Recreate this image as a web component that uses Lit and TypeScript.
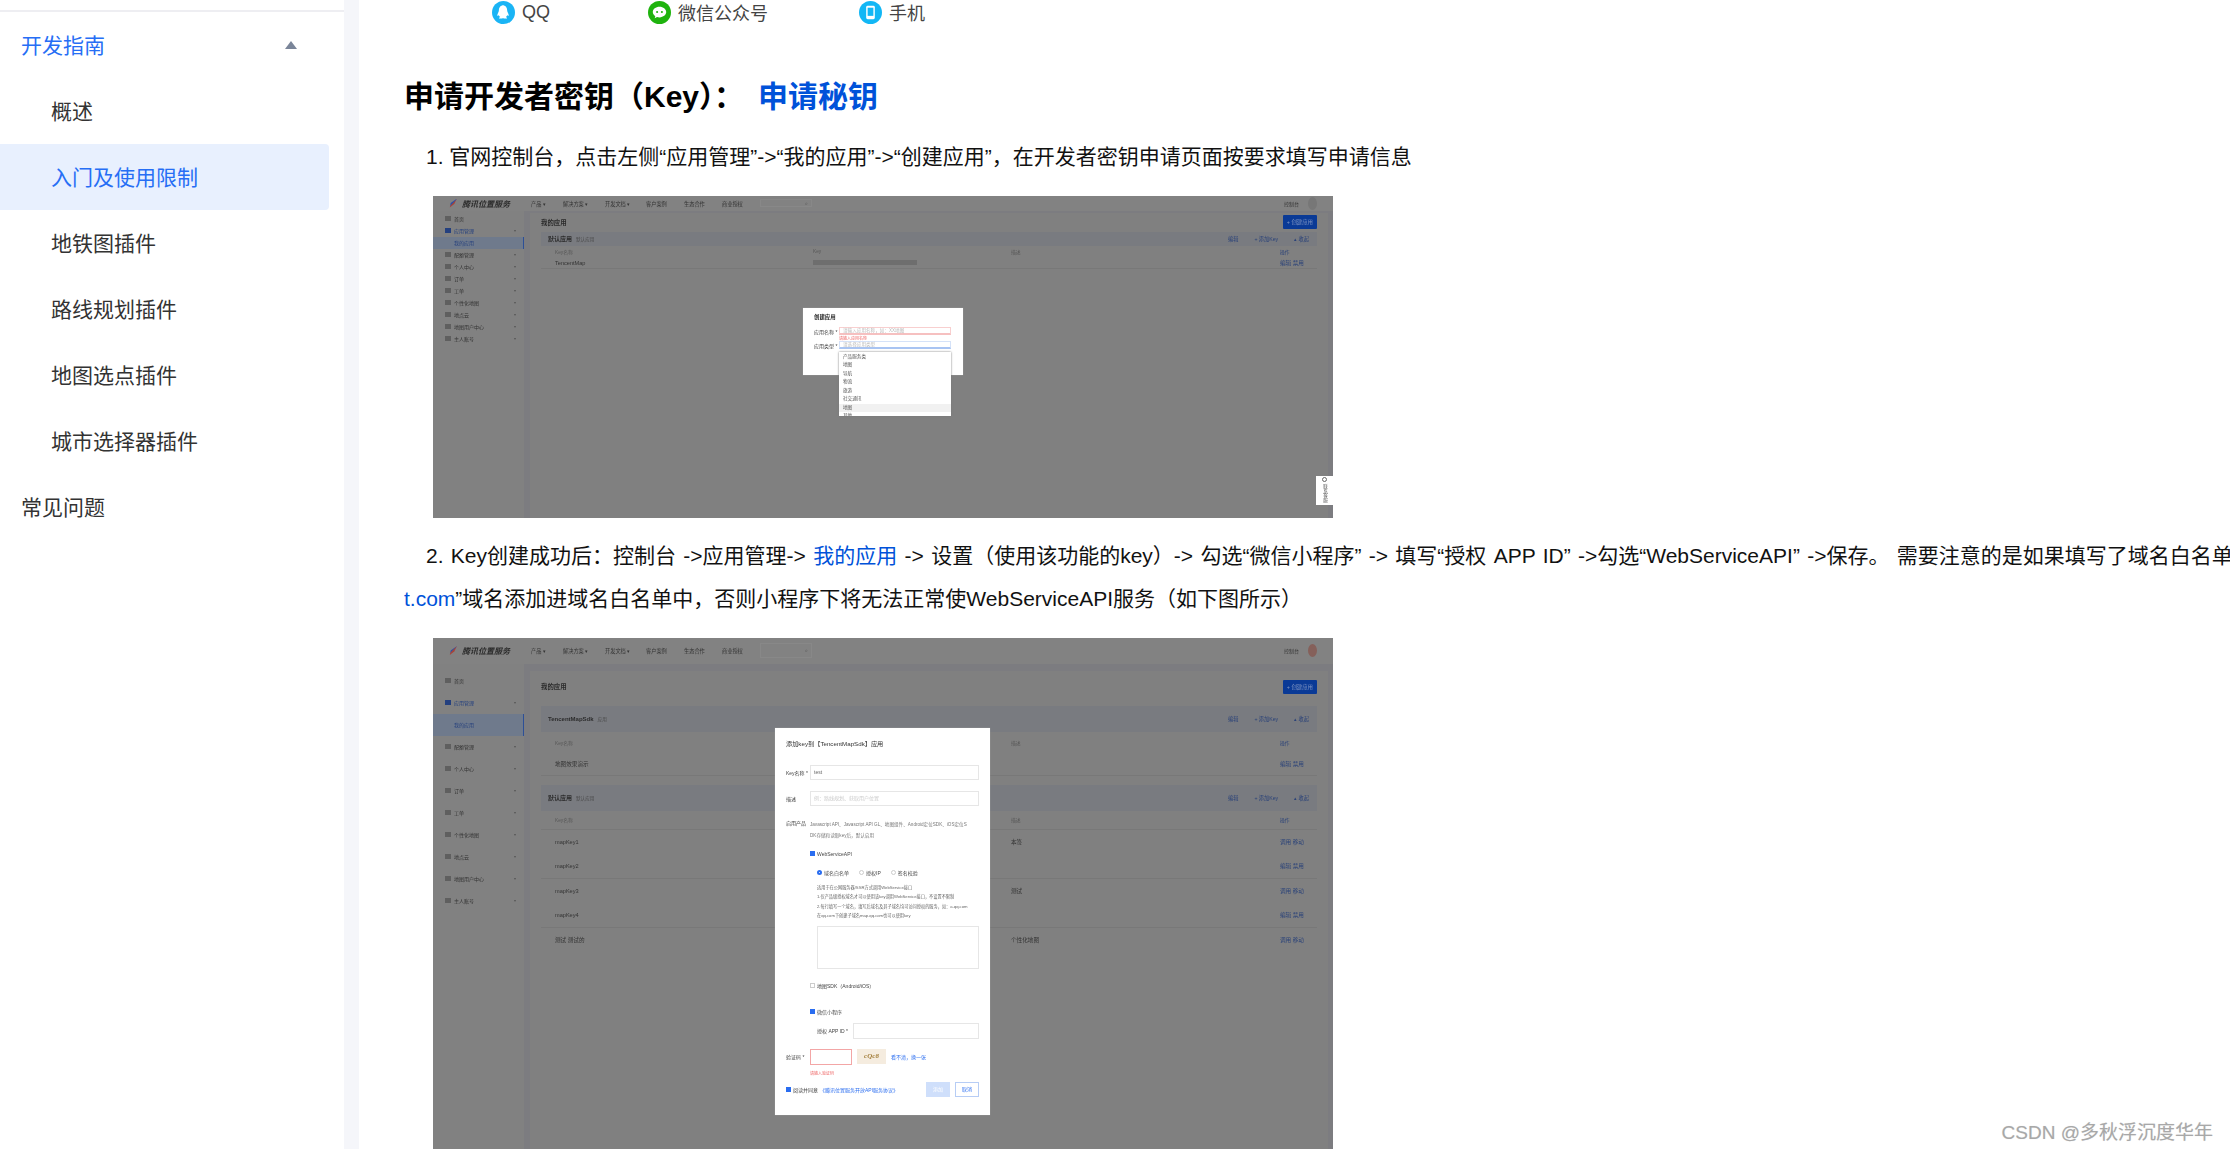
import { LitElement, html, css, nothing, TemplateResult } from 'lit';
import { customElement, property } from 'lit/decorators.js';

const MENU = ['首页', '应用管理', '我的应用', '配额管理', '个人中心', '订单', '工单', '个性化地图', '地点云', '地图用户中心', '主人账号'];
const NAV: [string, number][] = [['产品 ▾', 32], ['解决方案 ▾', 42], ['开发文档 ▾', 41], ['客户案例', 38], ['生态合作', 38], ['商业授权', 38]];

@customElement('mock-console')
class MockConsole extends LitElement {
  @property({ type: Boolean }) detail = false;

  static styles = css`
    :host {
      display: block;
      position: relative;
      overflow: hidden;
      background: #808080;
      font-family: 'Liberation Sans', 'Noto Sans CJK SC', sans-serif;
      color: #2c2c2c;
      font-size: 5px;
    }
    .shot { filter: blur(0.55px); height: 100%; display: flex; flex-direction: column; }
    .top { display: flex; align-items: center; background: #828282; color: #333; flex: none; padding-left: 15px; box-shadow: 0 1px 1px #777; }
    .logo { width: 9px; height: 9px; background: linear-gradient(135deg, #2a4fa8 45%, #a5443a 55%); clip-path: polygon(100% 0, 70% 60%, 20% 100%, 30% 50%); margin-right: 5px; }
    .brand { font-size: 8px; font-weight: 700; font-style: italic; color: #2b2b2b; width: 69px; white-space: nowrap; }
    .top span.nav { font-size: 5.2px; white-space: nowrap; }
    .search { width: 52px; border: 1px solid #888; display: flex; justify-content: flex-end; align-items: center; padding-right: 3px; color: #555; box-sizing: border-box; }
    .user { margin-left: auto; display: flex; align-items: center; gap: 9px; padding-right: 16px; }
    .avatar { width: 9px; height: 13px; border-radius: 50%; }
    .body { flex: 1; display: flex; min-height: 0; background: #7c7c80; }
    .side { width: 91px; background: #818181; flex: none; box-sizing: border-box; }
    .side div { display: flex; align-items: center; padding-left: 12px; color: #333; box-sizing: border-box; }
    .side i { width: 6px; height: 5px; background: #5f5f5f; margin-right: 3px; flex: none; }
    .side b { font-weight: 400; flex: 1; white-space: nowrap; }
    .side em { font-style: normal; margin-right: 8px; font-size: 4px; color: #555; }
    .side .on { color: #24407f; }
    .side .on i { background: #24407f; }
    .side .sub { background: #6f7a8c; color: #26417d; padding-left: 21px; border-right: 1px solid #2d4f96; }
    .main { flex: 1; margin: 0 5px 0 6px; background: #808080; padding: 0 11px; box-sizing: border-box; min-width: 0; }
    .head { display: flex; justify-content: space-between; align-items: center; font-size: 6.4px; font-weight: 700; color: #2a2a2a; box-sizing: border-box; }
    .add { background: #0a3a96; color: #8498c4; font-size: 5.4px; font-weight: 400; padding: 3px 4px; border-radius: 1px; }
    .band { display: flex; align-items: center; background: #797b80; padding: 0 8px 0 7px; gap: 4px; font-weight: 700; font-size: 6px; }
    .band small { font-size: 4.6px; font-weight: 400; color: #4a4a4a; margin-right: auto; }
    .band a { color: #2a4278; font-weight: 400; font-size: 5.2px; margin-left: 12px; }
    .row { display: grid; grid-template-columns: 258px 198px 1fr 37px; align-items: center; padding-left: 14px; font-size: 5.6px; color: #333; box-sizing: border-box; white-space: nowrap; }
    .row.h { color: #575757; font-size: 4.8px; }
    .row.line { border-bottom: 1px solid #787878; }
    .row a { color: #2a4278; }
    .mask { display: block; width: 104px; height: 5px; background: #6e6e6e; }
  `;

  private band(name: string, tag: string, h: number) {
    return html`<div class="band" style="height:${h}px">${name}<small>${tag}</small>
      <a>编辑</a><a>+ 添加Key</a><a>▴ 收起</a></div>`;
  }

  private row(a: string, b: unknown, c: string, ops: string, h: number, cls = '') {
    return html`<div class="row ${cls}" style="height:${h}px"><span>${a}</span><span>${b}</span><span>${c}</span>
      <a>${ops}</a></div>`;
  }

  render(): TemplateResult {
    const d = this.detail;
    const step = d ? 22 : 12;
    return html`<div class="shot">
      <div class="top" style="height:${d ? 26 : 15}px">
        <div class="logo"></div><div class="brand">腾讯位置服务</div>
        ${NAV.map(([t, w]) => html`<span class="nav" style="width:${w}px">${t}</span>`)}
        <span class="search" style="height:${d ? 15 : 8}px">⌕</span>
        <div class="user"><span>控制台</span><span class="avatar" style="background:${d ? '#85605a' : '#777'}"></span></div>
      </div>
      <div class="body">
        <div class="side" style="padding-top:${d ? 6 : 2}px">
          ${MENU.map((m, i) => html`<div class="${i === 1 ? 'on' : i === 2 ? 'sub' : ''}" style="height:${step}px">
            ${i === 2 ? nothing : html`<i></i>`}<b>${m}</b>${i === 0 || i === 2 ? nothing : html`<em>▾</em>`}</div>`)}
        </div>
        <div class="main" style="margin-top:${d ? 7 : 2}px">
          <div class="head" style="height:${d ? 35 : 19}px;padding-bottom:${d ? 3 : 0}px">我的应用<span class="add">+ 创建应用</span></div>
          ${d
            ? html`${this.band('TencentMapSdk', '应用', 26)}
                ${this.row('Key名称', '', '描述', '操作', 22, 'h')}
                ${this.row('地图效果演示', '', '', '编辑  禁用', 22, 'line')}
                <div style="height:9px"></div>
                ${this.band('默认应用', '默认应用', 26)}
                ${this.row('Key名称', '', '描述', '操作', 19, 'h line')}
                ${this.row('mapKey1', '', '本签', '调用  移动', 25)}
                ${this.row('mapKey2', '', '', '编辑  禁用', 24, 'line')}
                ${this.row('mapKey3', '', '测试', '调用  移动', 25)}
                ${this.row('mapKey4', '', '', '编辑  禁用', 24, 'line')}
                ${this.row('测试 测试的', '', '个性化地图', '调用  移动', 24)}`
            : html`${this.band('默认应用', '默认应用', 14)}
                ${this.row('Key名称', 'Key', '描述', '操作', 12, 'h')}
                ${this.row('TencentMap', html`<span class="mask"></span>`, '', '编辑  禁用', 11, 'line')}`}
        </div>
      </div>
    </div><slot></slot>`;
  }
}

@customElement('app-root')
export class AppRoot extends LitElement {
  static styles = css`
    :host {
      display: flex;
      height: 1149px;
      overflow: hidden;
      position: relative;
      background: #fff;
      font-family: 'Liberation Sans', 'Noto Sans CJK SC', sans-serif;
      color: #000;
    }
    aside {
      flex: none;
      width: 359px;
      box-sizing: border-box;
      padding-top: 12px;
      background: #fff;
      border-right: 15px solid #f5f6fa;
      position: relative;
    }
    aside::before { content: ''; position: absolute; left: 0; right: 0; top: 10px; height: 2px; background: #eeeef2; }
    .item {
      height: 66px;
      box-sizing: border-box;
      padding-bottom: 2px;
      display: flex;
      align-items: center;
      font-size: 21px;
      color: #333;
      padding-left: 21px;
      margin-right: 15px;
      border-radius: 0 4px 4px 0;
    }
    .item.sub { padding-left: 51px; }
    .item.blue { color: #266ef5; }
    .item.on { background: #e8f0fe; }
    .parent { position: relative; }
    .caret { position: absolute; left: 285px; top: 29px; width: 0; height: 0; border: 6px solid transparent; border-top: 0; border-bottom: 8px solid #7a8599; }
    main { flex: 1; min-width: 0; padding-left: 45px; overflow: hidden; }
    .channels { height: 24px; display: flex; align-items: center; font-size: 18px; color: #444; }
    .channels span { display: flex; align-items: center; gap: 7px; flex: none; }
    .channels svg { width: 23px; height: 23px; flex: none; }
    .qq { margin-left: 88px; width: 156px; }
    .wx { width: 211px; }
    h2 { margin: 52px 0 0; height: 42px; line-height: 42px; font-size: 30px; font-weight: 700; color: #000; white-space: nowrap; }
    h2 a { color: #0052d9; margin-left: 14px; }
    p { margin: 0; font-size: 21px; line-height: 43px; color: #111; white-space: nowrap; }
    p.first { margin-top: 16.5px; padding-left: 22px; }
    p.second { text-indent: 22px; word-spacing: 1.5px; }
    p a { color: #0052d9; }
    .pic { width: 900px; margin-left: 29px; }
    .pic1 { height: 322px; margin-top: 18px; margin-bottom: 16.5px; }
    .pic2 { height: 511px; margin-top: 17.5px; }
    .mark {
      position: absolute; right: 17px; bottom: 5px; font-size: 19px; color: #a8a8a8; white-space: nowrap;
      text-shadow: 0 0 1px #dcdcdc;
    }
    /* dialogs drawn inside the two screenshots */
    .dlg { position: absolute; background: #fff; color: #444; font-size: 5px; filter: blur(0.45px); box-sizing: border-box; box-shadow: 0 0 1px #aaa; white-space: nowrap; }
    .small { left: 370px; top: 112px; width: 160px; height: 67px; padding: 6px 12px 0 11px; }
    .small h4 { margin: 0 0 6px; font-size: 5.4px; line-height: 7px; color: #222; }
    .small .f { display: flex; align-items: center; gap: 3px; height: 9px; }
    .small label { width: 22px; flex: none; }
    .small .in { flex: 1; height: 8px; line-height: 6px; border: 1px solid #f8cfcf; border-bottom: 2px solid #f6c0c0; box-sizing: border-box; color: #bbb; padding-left: 3px; font-size: 4.6px; }
    .small .in.focus { border-color: #d5e2f8; border-bottom-color: #a9c4f2; }
    .err { color: #e66; font-size: 4px; line-height: 5px; height: 5px; margin-left: 25px; }
    .menu { position: absolute; left: 406px; top: 156px; width: 112px; height: 64px; background: #fff; overflow: hidden; box-shadow: 0 0 2px #777; color: #555; font-size: 4.6px; filter: blur(0.45px); padding-top: 1px; box-sizing: border-box; }
    .menu div { height: 8.5px; line-height: 8.5px; padding-left: 4px; }
    .menu .hi { background: #f1f1f1; }
    .float { position: absolute; left: 883px; top: 280px; width: 17px; height: 29px; background: #fff; color: #555; font-size: 4.6px; display: flex; flex-direction: column; align-items: center; justify-content: center; gap: 2px; filter: blur(0.35px); }
    .float i { width: 5px; height: 5px; border: 1px solid #666; border-radius: 50%; box-sizing: border-box; }
    .float span { writing-mode: vertical-rl; }
    .big { left: 342px; top: 90px; width: 215px; height: 387px; padding: 9px 11px 0; }
    .big h4 { margin: 0 0 14px; height: 14px; line-height: 14px; font-size: 6.2px; font-weight: 400; color: #333; }
    .fld { display: grid; grid-template-columns: 24px 1fr; align-items: center; }
    .inp { border: 1px solid #e6e6e6; box-sizing: border-box; height: 15px; line-height: 13px; padding-left: 3px; color: #666; }
    .inp.ph { color: #ccc; }
    .ind { margin-left: 24px; }
    .chk { display: flex; align-items: center; gap: 2px; height: 8px; }
    .box { width: 5px; height: 5px; background: #2a6df0; flex: none; }
    .box.off { background: #fff; border: 1px solid #ccc; box-sizing: border-box; }
    .radios { display: flex; gap: 10px; margin: 11px 0 0 7px; height: 8px; align-items: center; }
    .radios span { display: flex; align-items: center; gap: 2px; }
    .rd { width: 5px; height: 5px; border: 1px solid #ccc; border-radius: 50%; box-sizing: border-box; }
    .rd.on { border: 2px solid #2a6df0; }
    .desc { margin: 6px 0 0 7px; font-size: 4.2px; line-height: 9.6px; color: #666; }
    .area { margin: 5px 0 0 7px; height: 43px; border: 1px solid #e6e6e6; box-sizing: border-box; }
    .cap { display: flex; align-items: center; height: 16px; }
    .cap .inp { width: 42px; height: 16px; border-color: #f3a6a6; margin-right: 5px; }
    .cap .code { width: 29px; height: 15px; background: #f5ecdf; color: #a5803f; font: italic 700 7px 'Liberation Serif', serif; text-align: center; line-height: 15px; margin-right: 5px; }
    .cap a, .ag a { color: #2a6df0; }
    .ag { display: flex; align-items: center; justify-content: space-between; height: 15px; margin-top: 6px; }
    .btns { display: flex; gap: 5px; }
    .btn { width: 24px; height: 15px; line-height: 15px; text-align: center; background: #cfdffb; color: #fff; }
    .btn.ghost { background: #fff; border: 1px solid #b7cdf5; box-sizing: border-box; line-height: 13px; color: #2a6df0; }
  `;

  render() {
    return html`
      <aside>
        <div class="item blue parent">开发指南<span class="caret"></span></div>
        <div class="item sub">概述</div>
        <div class="item sub blue on">入门及使用限制</div>
        <div class="item sub">地铁图插件</div>
        <div class="item sub">路线规划插件</div>
        <div class="item sub">地图选点插件</div>
        <div class="item sub">城市选择器插件</div>
        <div class="item">常见问题</div>
      </aside>
      <main>
        <div class="channels">
          <span class="qq">
            <svg viewBox="0 0 24 24"><circle cx="12" cy="12" r="12" fill="#1ab4f5"/><path d="M12 4.500c-3 0-4.800 2.300-4.800 5.200 0 1-.3 1.700-.9 2.900-.7 1.400-.9 2.600-.5 2.900.3.200.8-.2 1.200-.9.300 1 .9 1.700 1.600 2.200-.8.300-1.300.7-1.300 1.100 0 .4 2.100.6 3.300.3.200-.1.400-.2.400-.2h1c0 0 .2.100.4.200 1.200.3 3.300.1 3.300-.3 0-.4-.5-.8-1.300-1.100.7-.5 1.300-1.200 1.600-2.200.4.700.9 1.100 1.200.9.400-.3.200-1.500-.5-2.900-.6-1.200-.9-1.900-.9-2.900 0-2.900-1.800-5.200-4.800-5.200z" fill="#fff"/></svg>QQ</span>
          <span class="wx">
            <svg viewBox="0 0 24 24"><circle cx="12" cy="12" r="12" fill="#1fb30e"/><path d="M12 6c-3.900 0-7 2.500-7 5.600 0 1.800 1 3.300 2.600 4.300l-.6 2.100 2.400-1.300c.8.200 1.700.4 2.600.4 3.900 0 7-2.500 7-5.500S15.900 6 12 6z" fill="#fff"/><circle cx="9.500" cy="11.500" r="1.100" fill="#1fb30e"/><circle cx="14.500" cy="11.500" r="1.100" fill="#1fb30e"/></svg>微信公众号</span>
          <span>
            <svg viewBox="0 0 24 24"><circle cx="12" cy="12" r="12" fill="#12b7f5"/><rect x="7.500" y="5" width="9" height="14" rx="1.500" fill="#fff"/><rect x="9" y="7" width="6" height="8.500" fill="#12b7f5"/></svg>手机</span>
        </div>
        <h2>申请开发者密钥（Key）：<a>申请秘钥</a></h2>
        <p class="first">1. 官网控制台，点击左侧“应用管理”-&gt;“我的应用”-&gt;“创建应用”，在开发者密钥申请页面按要求填写申请信息</p>
        <mock-console class="pic pic1">
          <div class="dlg small">
            <h4>创建应用</h4>
            <div class="f"><label>应用名称 *</label><div class="in">请输入应用名称，如：XX地图</div></div>
            <div class="err">请输入应用名称</div>
            <div class="f"><label>应用类型 *</label><div class="in focus">请选择应用类型</div></div>
          </div>
          <div class="menu"><div>产品服务类</div><div>地图</div><div>导航</div><div>物流</div><div>旅游</div><div>社交通讯</div><div class="hi">地图</div><div>其他</div></div>
          <div class="float"><i></i><span>联系客服</span></div>
        </mock-console>
        <p class="second">2. Key创建成功后：控制台 -&gt;应用管理-&gt; <a>我的应用</a> -&gt; 设置（使用该功能的key）-&gt; 勾选“微信小程序” -&gt; 填写“授权 APP ID” -&gt;勾选“WebServiceAPI” -&gt;保存。 需要注意的是如果填写了域名白名单<br><a>t.com</a>”域名添加进域名白名单中，否则小程序下将无法正常使WebServiceAPI服务（如下图所示）</p>
        <mock-console class="pic pic2" detail>
          <div class="dlg big">
            <h4>添加key到【TencentMapSdk】应用</h4>
            <div class="fld"><span>Key名称 *</span><div class="inp">test</div></div>
            <div class="fld" style="margin-top:11px"><span>描述</span><div class="inp ph">例：路线规划、获取用户位置</div></div>
            <div class="fld" style="margin-top:13px;align-items:start"><span>启用产品</span><div style="font-size:4.6px;line-height:11px;color:#777">Javascript API、Javascript API GL、地图组件、Android定位SDK、iOS定位S<br>DK存储和读取key后，默认启用</div></div>
            <div class="ind">
              <div class="chk" style="margin-top:9px"><i class="box"></i>WebServiceAPI</div>
              <div class="radios"><span><i class="rd on"></i>域名白名单</span><span><i class="rd"></i>授权IP</span><span><i class="rd"></i>签名校验</span></div>
              <div class="desc">适用于在公网服务器/SSR方式调用WebService接口<br>1.仅产品级授权域名才可以使用该key调用WebService接口，不设置不限制<br>2.每行填写一个域名，填写后域名及其子域名均可访问授权的服务，如：a.qq.com<br>在qq.com下创建子域名map.qq.com也可以使用key</div>
              <div class="area"></div>
              <div class="chk" style="margin-top:13px"><i class="box off"></i>地图SDK（Android/iOS）</div>
              <div class="chk" style="margin-top:18px"><i class="box"></i>微信小程序</div>
              <div style="display:flex;align-items:center;gap:3px;margin:7px 0 0 7px"><span style="width:33px">授权 APP ID *</span><div class="inp" style="flex:1;height:16px"></div></div>
            </div>
            <div class="fld" style="margin-top:10px"><span>验证码 *</span><div class="cap"><div class="inp"></div><div class="code">cQc8</div><a>看不清，换一张</a></div></div>
            <div class="ind err" style="margin:6px 0 0 24px">请输入验证码</div>
            <div class="ag"><div class="chk"><i class="box"></i>阅读并同意<a>《腾讯位置服务开放API服务协议》</a></div><div class="btns"><div class="btn">添加</div><div class="btn ghost">取消</div></div></div>
          </div>
        </mock-console>
      </main>
      <div class="mark">CSDN @多秋浮沉度华年</div>
    `;
  }
}
